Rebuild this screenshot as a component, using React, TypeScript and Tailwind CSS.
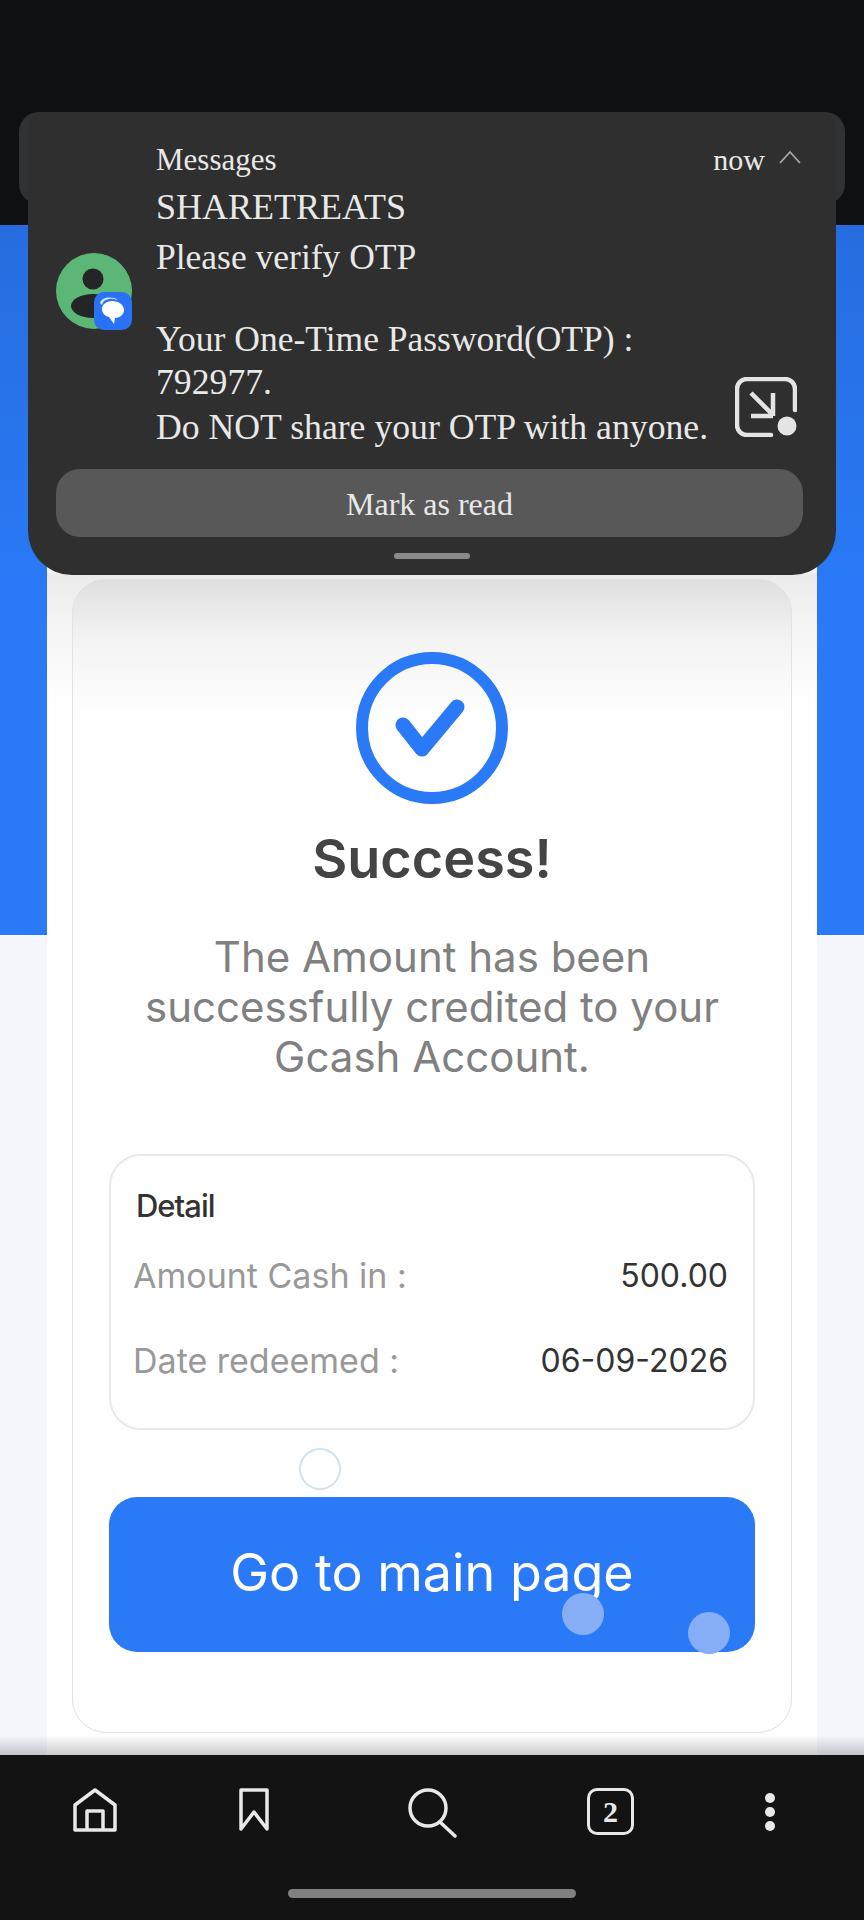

export default function App() {
  const serif = "font-['Liberation_Serif',serif]";
  return (
    <div className="relative w-[864px] h-[1920px] overflow-hidden flex flex-col bg-[#f6f7fd] font-['Inter',sans-serif]">
      <div className="h-[225px] bg-[#0f1011] shrink-0" />
      <main className="flex-1 flex flex-col bg-[linear-gradient(#2a7af8_0,#2a7af8_710px,#f6f7fd_710px)] relative">
        <div className="mx-[47px] flex-1 bg-[linear-gradient(#ffffff_0,#ffffff_340px,#eeeeee_350px,#ffffff_480px)] px-[25px] flex flex-col pt-[354px]">
          <div className="relative flex-1 border border-[#e2e2e2] rounded-[34px] mb-[22px] bg-[linear-gradient(#e2e2e2,#f3f3f3_60px,#ffffff_140px)] flex flex-col items-center pt-[72px] px-[36px]">
            <svg width="152" height="152" viewBox="0 0 152 152" fill="none">
              <circle cx="76" cy="76" r="70" stroke="#2a7af8" strokeWidth="12" />
              <path d="M47 73 L66 97 L101 55" stroke="#2a7af8" strokeWidth="15" strokeLinecap="round" strokeLinejoin="round" />
            </svg>
            <h1 className="mt-[20px] text-[54px] leading-[70px] font-semibold text-[#444444]">Success!</h1>
            <p className="mt-[38px] text-[42px] leading-[50px] text-[#808080] text-center">The Amount has been successfully credited to your Gcash Account.</p>
            <section className="mt-[72px] w-full h-[276px] border-2 border-[#e9e9e9] rounded-[32px] pl-[22px] pr-[25px] pt-[32px]">
              <div className="text-[31px] leading-[36px] text-[#333333] tracking-[-1px] px-[3px] font-medium">Detail</div>
              <div className="mt-[32px] flex justify-between items-center leading-[40px]">
                <span className="text-[34px] text-[#999999]">Amount Cash in :</span>
                <span className="text-[32px] text-[#333333]">500.00</span>
              </div>
              <div className="mt-[45px] flex justify-between items-center leading-[40px]">
                <span className="text-[34px] text-[#999999]">Date redeemed :</span>
                <span className="text-[32px] text-[#333333]">06-09-2026</span>
              </div>
            </section>
            <button className="mt-[67px] w-full h-[155px] rounded-[28px] bg-[#2a7af8] text-white text-[52px] pb-[4px]">Go to main page</button>
          </div>
        </div>
      </main>
      <nav className="h-[165px] shrink-0 bg-[#131313] flex flex-col">
        <div className="flex items-start pt-[33px] pl-[73px] h-[134px]">
          <svg width="44" height="44" viewBox="0 0 44 44" fill="none" stroke="#e8e8e8" strokeWidth="3.5" strokeLinejoin="round">
            <path d="M2 17 L22 2 L42 17 V42 H2 Z" />
            <path d="M14 42 V23 H30 V42" />
          </svg>
          <svg className="ml-[122px]" width="30" height="44" viewBox="0 0 30 44" fill="none" stroke="#e8e8e8" strokeWidth="3.5" strokeLinejoin="round">
            <path d="M2 2 H28 V41 L15 24 L2 41 Z" />
          </svg>
          <svg className="ml-[139px]" width="50" height="50" viewBox="0 0 50 50" fill="none" stroke="#e8e8e8" strokeWidth="3.5" strokeLinecap="round">
            <circle cx="20" cy="20" r="18" />
            <path d="M32 34 L47 48" />
          </svg>
          <div className={`ml-[129px] w-[47px] h-[47px] border-[3.5px] border-[#e8e8e8] rounded-[10px] flex items-center justify-center text-[#e8e8e8] text-[30px] font-bold ${serif}`}>2</div>
          <div className="ml-[131px] flex flex-col gap-[4px] pt-[5px]">
            <div className="w-[10px] h-[10px] rounded-full bg-[#e8e8e8]" />
            <div className="w-[10px] h-[10px] rounded-full bg-[#e8e8e8]" />
            <div className="w-[10px] h-[10px] rounded-full bg-[#e8e8e8]" />
          </div>
        </div>
        <div className="w-[288px] h-[9px] mx-auto rounded-full bg-[#808080]" />
      </nav>

      {/* shadow cast by the notification and above the nav */}
      <div className="absolute left-0 right-0 top-[225px] h-[400px] bg-[linear-gradient(rgba(0,0,0,0.1),rgba(0,0,0,0))] pointer-events-none" />
      <div className="absolute left-0 right-0 top-[1735px] h-[20px] bg-[linear-gradient(rgba(0,0,0,0),rgba(0,0,0,0.2))] pointer-events-none" />

      {/* touch markers */}
      <div className="absolute left-[299px] top-[1448px] w-[42px] h-[42px] rounded-full border-2 border-[#d3e0ee] bg-white" />
      <div className="absolute left-[562px] top-[1593px] w-[42px] h-[42px] rounded-full bg-[#85aef6]" />
      <div className="absolute left-[688px] top-[1612px] w-[42px] h-[42px] rounded-full bg-[#85aef6]" />

      {/* notification */}
      <div className="absolute left-[19px] top-[112px] w-[826px] h-[92px] rounded-[20px] bg-[#303233]" />
      <div className={`absolute left-[28px] top-[112px] w-[808px] h-[463px] rounded-b-[44px] rounded-t-[20px] bg-[#2f2f2f] text-[#e8e8e8] ${serif} flex flex-col px-[28px]`}>
        <div className="flex flex-1 min-h-0 pt-[30px]">
          <div className="w-[100px] shrink-0 flex items-center pb-[10px]">
            <svg width="76" height="77" viewBox="0 0 76 77">
              <circle cx="38" cy="38" r="38" fill="#5cb777" />
              <circle cx="37" cy="26" r="10.5" fill="#232526" />
              <ellipse cx="37" cy="53" rx="22" ry="12" fill="#232526" />
              <rect x="38" y="39" width="38" height="38" rx="10" fill="#2a72f5" />
              <path d="M44 50 C46 44 56 43 62 47 L58 46 C52 45 47 47 46 52 Z" fill="#ffffff" opacity="0.85" />
              <path d="M56 48 C63 48 68 52 68 57 C68 62 63 65 59 65 L58 71 L53 64 C49 63 46 60 46 56 C46 51 51 48 56 48 Z" fill="#ffffff" />
            </svg>
          </div>
          <div className="flex-1 flex flex-col min-w-0">
            <div className="flex justify-between items-center h-[36px]">
              <span className="text-[31px]">Messages</span>
              <span className="flex items-center gap-[14px] pr-[7px]">
                <span className="text-[30px] pb-[1px]">now</span>
                <svg className="mb-[6px]" width="22" height="14" viewBox="0 0 22 14" fill="none" stroke="#a8a8a8" strokeWidth="1.8"><path d="M1 13 L11 2 L21 13" /></svg>
              </span>
            </div>
            <div className="text-[36px] leading-[42px] mt-[8px]">SHARETREATS</div>
            <div className="text-[35.5px] leading-[42px] mt-[8px]">Please verify OTP</div>
            <div className="text-[35.5px] leading-[42px] mt-[40px]">Your One-Time Password(OTP) :</div>
            <div className="flex justify-between items-end">
              <div className="text-[35.7px] leading-[45px]">792977.<br />Do NOT share your OTP with anyone.</div>
              <svg className="shrink-0 mb-[13px] mr-[11px]" width="62" height="60" viewBox="0 0 62 60" fill="none" stroke="#e4e4e4" strokeWidth="4.5" strokeLinecap="round">
                <path d="M60 33 V12 A10 10 0 0 0 50 2 H12 A10 10 0 0 0 2 12 V48 A10 10 0 0 0 12 58 H36" />
                <path d="M16 16 L38 38 M38 16 V39 M16 39 H38" strokeLinecap="butt" />
                <circle cx="52" cy="49" r="9.5" fill="#e4e4e4" stroke="none" />
              </svg>
            </div>
          </div>
        </div>
        <div className="mt-[19px] mr-[5px] h-[68px] rounded-[24px] bg-[#585858] flex items-center justify-center text-[32px] pt-[2px] shrink-0">Mark as read</div>
        <div className="mt-[16px] mb-[16px] w-[76px] h-[6px] mx-auto rounded-full bg-[#8a8a8a] shrink-0" />
      </div>
    </div>
  );
}
